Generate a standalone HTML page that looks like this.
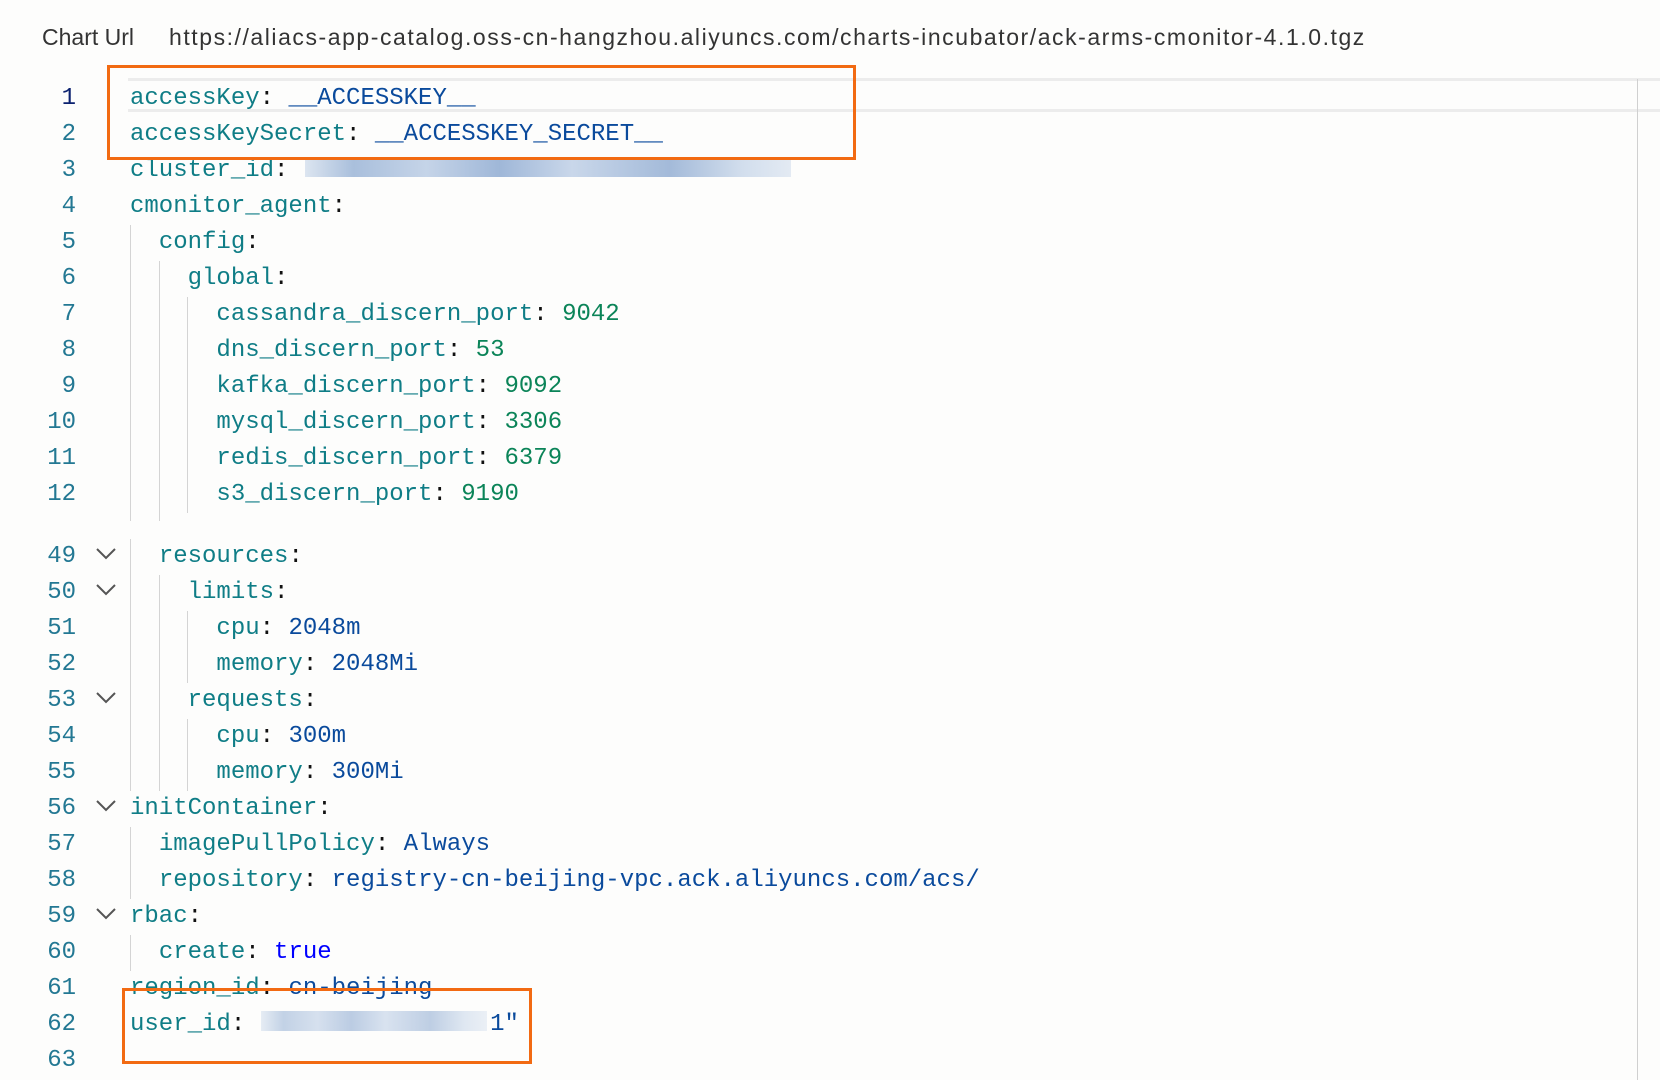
<!DOCTYPE html>
<html><head><meta charset="utf-8">
<style>
body{margin:0;width:1660px;height:1080px;background:#fdfdfc;position:relative;overflow:hidden;font-family:"Liberation Mono",monospace;}
.hdr{position:absolute;top:24px;font:23px "Liberation Sans",sans-serif;color:#333;white-space:nowrap}
.ln{position:absolute;width:76px;text-align:right;font-size:24px;color:#237893;line-height:36px}
.code{position:absolute;font-size:24px;line-height:36px;white-space:pre;color:#111}
.k{color:#0f7d86}.s{color:#0a4a9c}.n{color:#0b8458}.b{color:#0000ff}
.g{position:absolute;width:1px;background:#d4d4d4}
.chev{position:absolute;left:96px;width:20px;height:12px}
.box{position:absolute;border:3px solid #f26a12}
.blur{position:absolute;background:linear-gradient(90deg,#dce5f0,#a9bfdc 10%,#c5d4e8 25%,#9fb7d8 40%,#c9d7ea 55%,#a3bad9 75%,#d2deed 90%,#e3eaf3)}
</style></head><body>
<div class="hdr" style="left:42px">Chart Url</div>
<div class="hdr" style="left:169px;letter-spacing:1.55px">https://aliacs-app-catalog.oss-cn-hangzhou.aliyuncs.com/charts-incubator/ack-arms-cmonitor-4.1.0.tgz</div>
<div style="position:absolute;left:128px;top:78px;width:1532px;height:34px;border-top:3px solid #ececec;border-bottom:3px solid #ececec;box-sizing:border-box"></div>
<div style="position:absolute;left:1637px;top:79px;width:1px;height:1001px;background:#d0d0d0"></div>
<div class="blur" style="left:305px;top:160px;height:17px;width:486px"></div>
<div class="blur" style="left:261px;top:1011px;height:20px;width:226px;opacity:.7"></div>
<div class="ln" style="top:81px;color:#0b216f">1</div>
<div class="ln" style="top:117px">2</div><div class="ln" style="top:153px">3</div><div class="ln" style="top:189px">4</div><div class="ln" style="top:225px">5</div><div class="ln" style="top:261px">6</div><div class="ln" style="top:297px">7</div><div class="ln" style="top:333px">8</div><div class="ln" style="top:369px">9</div><div class="ln" style="top:405px">10</div><div class="ln" style="top:441px">11</div><div class="ln" style="top:477px">12</div>
<div class="ln" style="top:539px">49</div><div class="ln" style="top:575px">50</div><div class="ln" style="top:611px">51</div><div class="ln" style="top:647px">52</div><div class="ln" style="top:683px">53</div><div class="ln" style="top:719px">54</div><div class="ln" style="top:755px">55</div><div class="ln" style="top:791px">56</div><div class="ln" style="top:827px">57</div><div class="ln" style="top:863px">58</div><div class="ln" style="top:899px">59</div><div class="ln" style="top:935px">60</div><div class="ln" style="top:971px">61</div><div class="ln" style="top:1007px">62</div><div class="ln" style="top:1043px">63</div>
<svg class="chev" style="top:548px" viewBox="0 0 20 12"><polyline points="1,1 10,10 19,1" fill="none" stroke="#555" stroke-width="2"/></svg>
<svg class="chev" style="top:584px" viewBox="0 0 20 12"><polyline points="1,1 10,10 19,1" fill="none" stroke="#555" stroke-width="2"/></svg>
<svg class="chev" style="top:692px" viewBox="0 0 20 12"><polyline points="1,1 10,10 19,1" fill="none" stroke="#555" stroke-width="2"/></svg>
<svg class="chev" style="top:800px" viewBox="0 0 20 12"><polyline points="1,1 10,10 19,1" fill="none" stroke="#555" stroke-width="2"/></svg>
<svg class="chev" style="top:908px" viewBox="0 0 20 12"><polyline points="1,1 10,10 19,1" fill="none" stroke="#555" stroke-width="2"/></svg>
<div class="g" style="left:130px;top:225px;height:296px"></div>
<div class="g" style="left:159px;top:261px;height:260px"></div>
<div class="g" style="left:187px;top:297px;height:216px"></div>
<div class="g" style="left:130px;top:539px;height:252px"></div>
<div class="g" style="left:159px;top:575px;height:216px"></div>
<div class="g" style="left:187px;top:611px;height:72px"></div>
<div class="g" style="left:187px;top:719px;height:72px"></div>
<div class="g" style="left:130px;top:827px;height:72px"></div>
<div class="g" style="left:130px;top:935px;height:36px"></div>
<div class="code" style="left:130px;top:81px"><span class="k">accessKey</span>: <span class="s">__ACCESSKEY__</span>
<span class="k">accessKeySecret</span>: <span class="s">__ACCESSKEY_SECRET__</span>
<span class="k">cluster_id</span>:
<span class="k">cmonitor_agent</span>:
  <span class="k">config</span>:
    <span class="k">global</span>:
      <span class="k">cassandra_discern_port</span>: <span class="n">9042</span>
      <span class="k">dns_discern_port</span>: <span class="n">53</span>
      <span class="k">kafka_discern_port</span>: <span class="n">9092</span>
      <span class="k">mysql_discern_port</span>: <span class="n">3306</span>
      <span class="k">redis_discern_port</span>: <span class="n">6379</span>
      <span class="k">s3_discern_port</span>: <span class="n">9190</span></div>
<div class="code" style="left:130px;top:539px">  <span class="k">resources</span>:
    <span class="k">limits</span>:
      <span class="k">cpu</span>: <span class="s">2048m</span>
      <span class="k">memory</span>: <span class="s">2048Mi</span>
    <span class="k">requests</span>:
      <span class="k">cpu</span>: <span class="s">300m</span>
      <span class="k">memory</span>: <span class="s">300Mi</span>
<span class="k">initContainer</span>:
  <span class="k">imagePullPolicy</span>: <span class="s">Always</span>
  <span class="k">repository</span>: <span class="s">registry-cn-beijing-vpc.ack.aliyuncs.com/acs/</span>
<span class="k">rbac</span>:
  <span class="k">create</span>: <span class="b">true</span>
<span class="k">region_id</span>: <span class="s">cn-beijing</span>
<span class="k">user_id</span>:                 <span class="s">1"</span>
</div>
<div class="box" style="left:107px;top:65px;width:743px;height:89px"></div>
<div class="box" style="left:122px;top:988px;width:404px;height:70px"></div>
</body></html>
